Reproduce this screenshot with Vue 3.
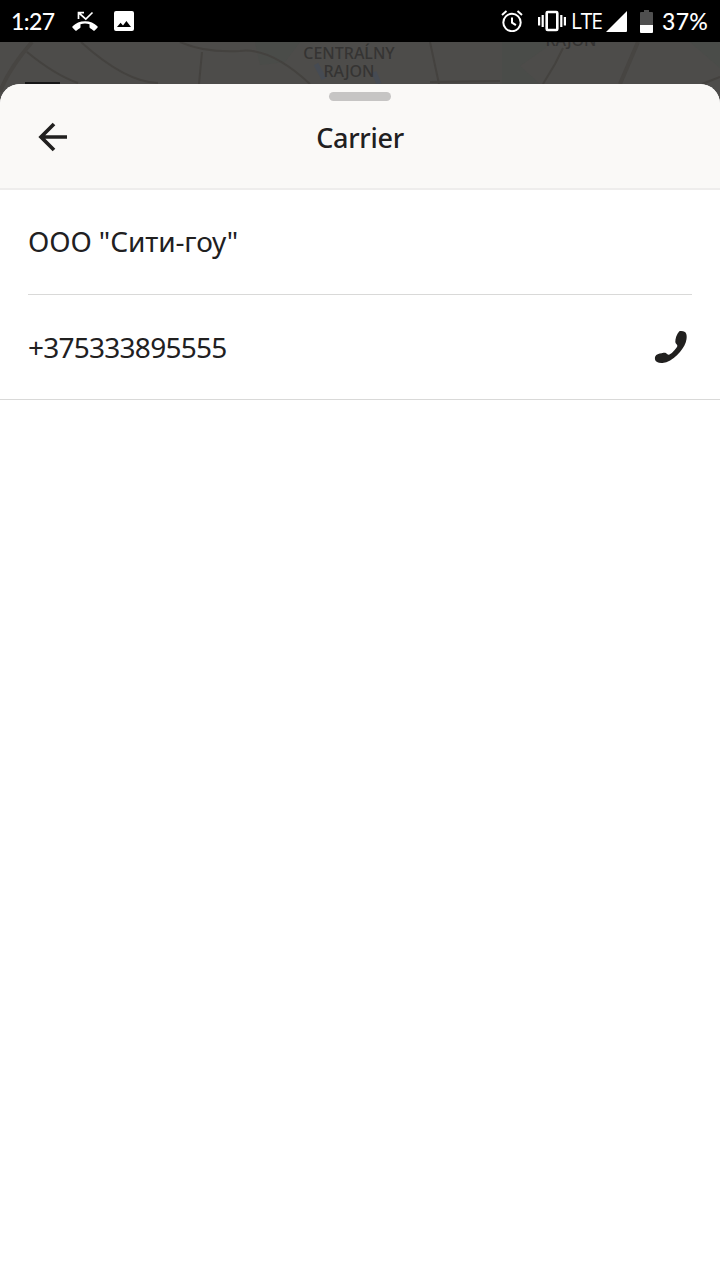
<template>
  <div class="screen">
    <div class="status-bar">
      <span class="clock">1:27</span>
      <svg class="missed" width="26" height="20" viewBox="0 0 26 20">
        <path d="M6.500 8V1.600H12M7 2l6.800 6.200L20.500 1.500" fill="none" stroke="#fff" stroke-width="1.700" />
        <path
          d="M13 10.200c5 0 9.300 1.900 12.400 5 .5.5.5 1 0 1.500l-2.700 2.700c-.5.5-1 .4-1.400 0-1-.9-2-1.600-3.100-2.200-.5-.3-.7-.6-.7-1.100v-2.900c-3-.9-6-.9-9 0v2.900c0 .5-.2.900-.7 1.100-1.100.6-2.200 1.300-3.100 2.200-.5.4-.9.500-1.400 0L.6 16.700c-.5-.5-.5-1 0-1.500 3.100-3.100 7.400-5 12.400-5z"
          fill="#fff"
        />
      </svg>
      <svg class="picture" width="20" height="20" viewBox="0 0 20 20">
        <path
          fill="#fff"
          fill-rule="evenodd"
          d="M2 0h16a2 2 0 0 1 2 2v16a2 2 0 0 1-2 2H2a2 2 0 0 1-2-2V2a2 2 0 0 1 2-2zM3 16h14l-4.600-6-3.400 4.500-2.400-2.800z"
        />
      </svg>
      <span class="spacer"></span>
      <svg class="alarm" width="22" height="22" viewBox="0 0 22 22" fill="none" stroke="#fff" stroke-width="2">
        <circle cx="11" cy="12.500" r="8.700" />
        <path d="M11 7.500v5.200l3.900 2.500M1 5l4.500-3.900M21 5l-4.500-3.900" stroke-width="2" />
      </svg>
      <svg class="vibrate" width="28" height="22" viewBox="0 0 28 22" fill="none" stroke="#fff" stroke-width="2.200">
        <rect x="8.700" y="2" width="10.600" height="18" rx="1" stroke-width="2.600" />
        <path d="M1.100 7v8.500M4.700 5v12M26.900 7v8.500M23.300 5v12" />
      </svg>
      <span class="network">LTE</span>
      <svg class="signal" width="21" height="21" viewBox="0 0 21 21">
        <path d="M21 0v20a1 1 0 0 1-1 1H0z" fill="#fff" />
      </svg>
      <svg class="battery" width="13" height="23" viewBox="0 0 13 23">
        <path d="M4 0h5v2h3a1 1 0 0 1 1 1v12H0V3a1 1 0 0 1 1-1h3z" fill="#4f4f4f" />
        <path d="M0 15h13v7a1 1 0 0 1-1 1H1a1 1 0 0 1-1-1z" fill="#fff" />
      </svg>
      <span class="percent">37%</span>
    </div>

    <!-- dimmed map behind the sheet -->
    <div class="map">
      <svg class="roads" width="720" height="64" viewBox="0 0 720 64" fill="none">
        <path d="M255 0h45l-15 20-25 3zM502 0h52l-34 24 20 18h-38zM690 0h30v26z" fill="#4a4c49" />
        <path d="M316 22l8 15M374 30l5 12" stroke="#464b53" stroke-width="5" />
        <g stroke="#44423f" stroke-width="2">
          <path d="M27 10Q55 33 78 41M81 0Q125 40 158 41M180 0q25 11 60 9 30-4 70 33M202 10l-3 32M563 6l-8 16-12 20M430 0q6 28 9 42M430 40l70-1M702 42l18-7" />
          <path d="M32 0Q8 28 0 50M638 0l-18 42" stroke-width="4" stroke="#474542" />
        </g>
        <path d="M25 41h35" stroke="#171717" stroke-width="2" />
      </svg>
      <div class="place">CENTRAĹNY<br />RAJON</div>
      <div class="place place-cut">RAJON</div>
    </div>

    <div class="sheet">
      <div class="sheet-header">
        <div class="handle"></div>
        <div class="title-row">
          <svg class="back" width="30" height="30" viewBox="0 0 30 30" fill="none" stroke="#21201f" stroke-width="3.700">
            <path d="M29 15H4M16 2L3 15l13 13" />
          </svg>
          <h1 class="title">Carrier</h1>
        </div>
      </div>

      <div class="row">
        <span class="name">{{ carrier.name }}</span>
      </div>
      <div class="row row-last">
        <span class="phone">{{ carrier.phone }}</span>
        <svg class="call" width="34" height="34" viewBox="0 0 34 34">
          <path
            d="M25.300 1.200C27.200.7 29.300 1 31 2c2 1.500 2.300 6 .7 10.500-1.500 4.200-4.500 8.500-8.500 12.500-4.500 4.500-9.500 7.500-14.700 8C4.500 33.300 1.500 32 1 29.500c-.5-2.500.5-4.500 2.700-5.300 2.600-1 5.400-1.500 7.300-1.500 1.500 0 2 1.800 3.300 2 1.300.2 3-1.300 4.700-3 2-1.900 3.700-4 4.300-5.500.5-1.600-1.900-2.500-2-4.200-.1-3 1.300-8 4-10.800z"
            fill="#21201f"
          />
        </svg>
      </div>
    </div>
  </div>
</template>

<script setup>
const carrier = {
  name: 'ООО "Сити-гоу"',
  phone: '+375333895555',
}
</script>

<style>
body {
  margin: 0;
}
</style>

<style scoped>
.screen {
  display: flex;
  flex-direction: column;
  width: 720px;
  height: 1280px;
  overflow: hidden;
  background: #fff;
  color: #21201f;
  font-family: 'Noto Sans', sans-serif;
}

.status-bar {
  display: flex;
  align-items: center;
  flex-shrink: 0;
  box-sizing: border-box;
  height: 42px;
  padding: 0 11px 0 11px;
  background: #000;
  color: #fff;
  white-space: nowrap;
}

.clock {
  width: 61px;
  font-family: Lato, sans-serif;
  font-size: 23px;
  font-weight: 500;
  letter-spacing: -0.6px;
}

.picture {
  margin-left: 16px;
}

.spacer {
  flex: 1;
}

.vibrate {
  margin-left: 15px;
}

.network {
  width: 30px;
  margin-left: 5px;
  font-family: 'Open Sans', sans-serif;
  font-size: 21px;
  letter-spacing: -1.2px;
}

.signal {
  margin-left: 5px;
}

.battery {
  margin-left: 13px;
}

.percent {
  width: 47px;
  margin-left: 9px;
  font-family: Lato, sans-serif;
  font-size: 23px;
  font-weight: 500;
  letter-spacing: 0.3px;
}

.map {
  position: relative;
  flex-shrink: 0;
  height: 64px;
  margin-bottom: -22px;
  overflow: hidden;
  background: #4d4c4a;
}

.roads {
  display: block;
}

.place {
  position: absolute;
  top: 2px;
  left: 289px;
  width: 120px;
  color: #353433;
  font-size: 16px;
  font-weight: 500;
  line-height: 18px;
  text-align: center;
}

.place-cut {
  top: -11px;
  left: 511px;
}

.sheet {
  position: relative;
  flex: 1;
  border-radius: 20px 20px 0 0;
  overflow: hidden;
  background: #fff;
}

.sheet-header {
  box-sizing: border-box;
  height: 106px;
  padding-top: 8px;
  border-bottom: 2px solid #eeedec;
  background: #faf9f7;
}

.handle {
  width: 62px;
  height: 9px;
  margin: 0 auto;
  border-radius: 5px;
  background: #c6c5c4;
}

.title-row {
  display: grid;
  grid-template-columns: 80px 1fr 80px;
  align-items: center;
  height: 72px;
}

.back {
  margin-left: 38px;
}

.title {
  margin: 0;
  padding-top: 2px;
  font-size: 27px;
  font-weight: 500;
  line-height: 40px;
  letter-spacing: -0.3px;
  text-align: center;
}

.row {
  display: flex;
  align-items: center;
  justify-content: space-between;
  box-sizing: border-box;
  height: 105px;
  margin: 0 28px;
  border-bottom: 1px solid #d9d9d8;
  font-size: 28px;
}

.row-last {
  margin: 0;
  padding: 0 32px 0 28px;
}

.name {
  padding-bottom: 2px;
  letter-spacing: -0.1px;
}

.phone {
  padding-bottom: 1px;
  letter-spacing: -0.75px;
}
</style>
